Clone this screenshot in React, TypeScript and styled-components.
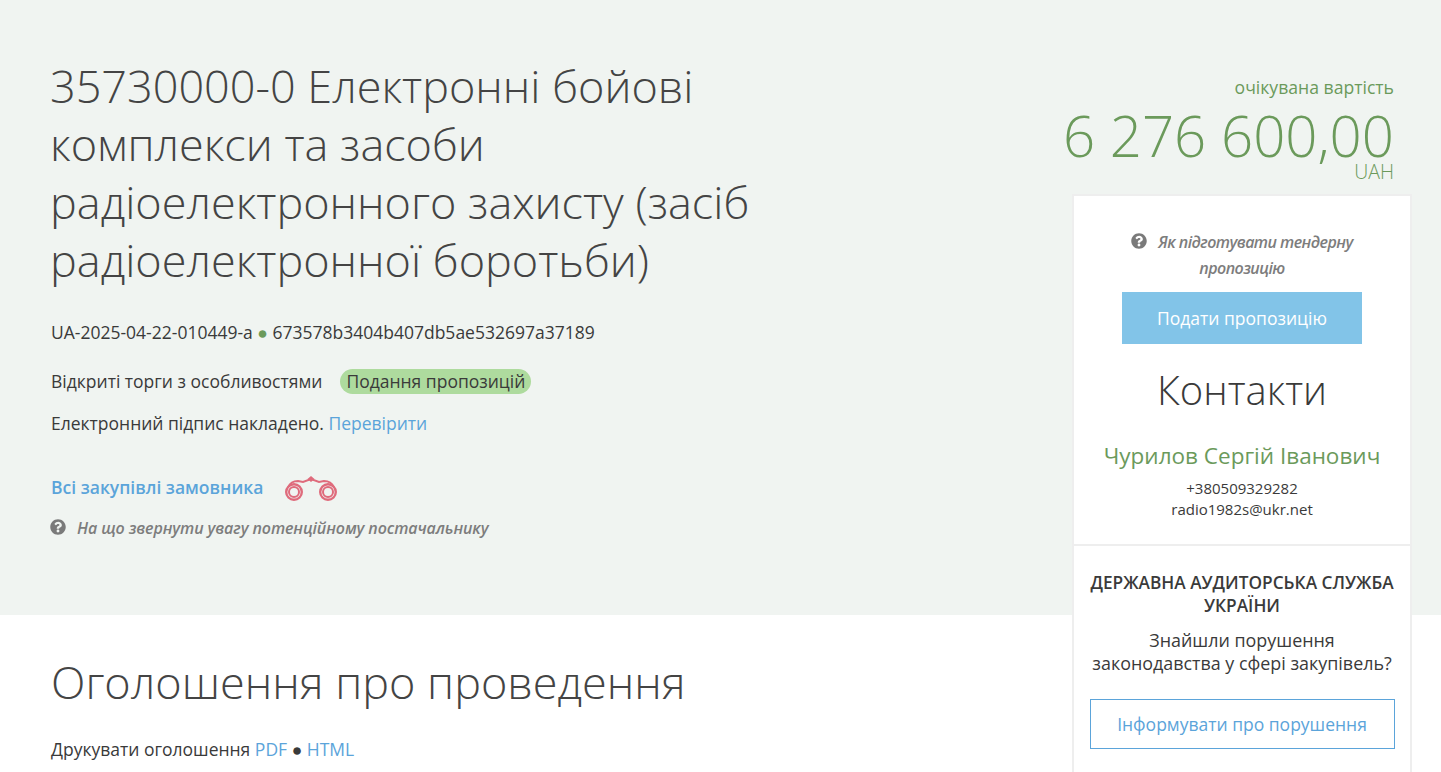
import React from 'react';
import styled, { createGlobalStyle } from 'styled-components';
import { FaQuestionCircle } from 'react-icons/fa';

const GlobalStyle = createGlobalStyle`
  html, body {
    margin: 0;
    padding: 0;
    height: 100%;
    overflow: hidden;
    background: #fff;
  }
  body {
    font-family: "Open Sans", "Noto Sans", sans-serif;
    font-size: 17.5px;
    color: #3a3a3a;
  }
`;

const Binoculars: React.FC = () => (
  <BinocularsSvg viewBox="0 0 52 28" fill="none" stroke="#df6b7c">
    <circle cx="9" cy="16" r="7.8" strokeWidth="2.4" />
    <circle cx="9" cy="16" r="5" strokeWidth="2" />
    <circle cx="43" cy="16" r="7.8" strokeWidth="2.4" />
    <circle cx="43" cy="16" r="5" strokeWidth="2" />
    <path d="M3.5 11 C5 7 8 5 13 5 L18 6 L26 3 L34 6 L39 5 C44 5 47 7 48.5 11" strokeWidth="2" />
    <path d="M26 0 L29.5 3 L26 6 L22.5 3 Z" fill="#df6b7c" strokeWidth="0" />
  </BinocularsSvg>
);

const App: React.FC = () => {
  return (
    <>
      <GlobalStyle />
      <Hero>
        <Main>
          <Title>
            35730000-0 Електронні бойові комплекси та засоби радіоелектронного захисту (засіб
            радіоелектронної боротьби)
          </Title>
          <IdRow>
            UA-2025-04-22-010449-a <Dot>●</Dot> 673578b3404b407db5ae532697a37189
          </IdRow>
          <TypeRow>
            Відкриті торги з особливостями
            <StatusBadge>Подання пропозицій</StatusBadge>
          </TypeRow>
          <SignRow>
            Електронний підпис накладено. <Link href="#">Перевірити</Link>
          </SignRow>
          <CustomerRow>
            <BoldLink href="#">Всі закупівлі замовника</BoldLink>
            <Binoculars />
          </CustomerRow>
          <HintRow>
            <HintIcon />
            <HintText>На що звернути увагу потенційному постачальнику</HintText>
          </HintRow>
        </Main>
        <Side>
          <PriceLabel>очікувана вартість</PriceLabel>
          <Price>6 276 600,00</Price>
          <Currency>UAH</Currency>
          <Card>
            <CardTop>
              <CardHint>
                <CardHintIcon />
                Як підготувати тендерну пропозицію
              </CardHint>
              <SubmitButton>Подати пропозицію</SubmitButton>
              <ContactsTitle>Контакти</ContactsTitle>
              <ContactName>Чурилов Сергій Іванович</ContactName>
              <ContactLine>+380509329282</ContactLine>
              <ContactLine>radio1982s@ukr.net</ContactLine>
            </CardTop>
            <CardBottom>
              <AuditTitle>ДЕРЖАВНА АУДИТОРСЬКА СЛУЖБА УКРАЇНИ</AuditTitle>
              <AuditText>Знайшли порушення законодавства у сфері закупівель?</AuditText>
              <ReportButton>Інформувати про порушення</ReportButton>
            </CardBottom>
          </Card>
        </Side>
      </Hero>
      <Notice>
        <NoticeTitle>Оголошення про проведення</NoticeTitle>
        <PrintRow>
          Друкувати оголошення <Link href="#">PDF</Link> ● <Link href="#">HTML</Link>
        </PrintRow>
      </Notice>
    </>
  );
};

const Hero = styled.header`
  display: flex;
  justify-content: space-between;
  height: 615px;
  padding: 0 29px 0 51px;
  box-sizing: border-box;
  background: #f0f4f1;
`;

const Main = styled.div`
  width: 740px;
  padding-top: 57px;
`;

const Title = styled.h1`
  margin: 0 0 0 -1px;
  font-size: 45px;
  line-height: 58px;
  font-weight: 300;
  color: #444;
`;

const IdRow = styled.div`
  margin-top: 32px;
  line-height: 22px;
`;

const Dot = styled.span`
  color: #6b9a5b;
`;

const TypeRow = styled.div`
  display: flex;
  align-items: center;
  margin-top: 25px;
  line-height: 26px;
`;

const StatusBadge = styled.span`
  margin-left: 18px;
  padding: 0 6px;
  border-radius: 13px;
  line-height: 25px;
  background: #aedb9e;
`;

const SignRow = styled.div`
  margin-top: 16px;
  line-height: 26px;
`;

const Link = styled.a`
  color: #5ba4da;
  text-decoration: none;
`;

const BoldLink = styled(Link)`
  font-weight: 600;
`;

const CustomerRow = styled.div`
  display: flex;
  align-items: center;
  gap: 22px;
  margin-top: 33px;
  height: 36px;
`;

const BinocularsSvg = styled.svg`
  width: 52px;
  height: 28px;
  margin-top: 6px;
`;

const HintRow = styled.div`
  display: flex;
  align-items: center;
  gap: 11px;
  margin-top: 11px;
  height: 24px;
`;

const HintIcon = styled(FaQuestionCircle)`
  width: 16px;
  height: 16px;
  margin: -2px 0 0 -1px;
  color: #7a7a7a;
`;

const HintText = styled.em`
  font-size: 16px;
  font-weight: 600;
  color: #7d7d7d;
  letter-spacing: -0.1px;
`;

const Side = styled.aside`
  display: flex;
  flex-direction: column;
  align-items: flex-end;
  width: 340px;
  padding-top: 74px;
`;

const PriceLabel = styled.div`
  margin-right: 18px;
  font-size: 17.6px;
  line-height: 26px;
  color: #6b9a5b;
  white-space: nowrap;
`;

const Price = styled.div`
  margin: 8px 18px 0 0;
  font-size: 56.4px;
  line-height: 56px;
  font-weight: 300;
  color: #6b9a5b;
  white-space: nowrap;
`;

const Currency = styled.div`
  margin: 1px 18px 0 0;
  font-size: 19.5px;
  line-height: 14px;
  font-weight: 300;
  color: #6b9a5b;
`;

const Card = styled.section`
  width: 340px;
  margin-top: 15px;
  box-sizing: border-box;
  background: #fff;
  border: 2px solid #eeeeee;
  flex-shrink: 0;
`;

const CardTop = styled.div`
  display: flex;
  flex-direction: column;
  align-items: center;
  padding: 33px 0 24px;
  text-align: center;
`;

const CardHint = styled.em`
  width: 240px;
  font-size: 16px;
  font-weight: 600;
  line-height: 26px;
  color: #7d7d7d;
  letter-spacing: -0.55px;
`;

const CardHintIcon = styled(FaQuestionCircle)`
  width: 16px;
  height: 16px;
  margin-right: 11px;
  vertical-align: -1px;
  color: #7a7a7a;
`;

const SubmitButton = styled.button`
  width: 240px;
  height: 52px;
  margin-top: 11px;
  border: 0;
  background: #82c4e8;
  color: #fff;
  font-family: inherit;
  font-size: 17.5px;
`;

const ContactsTitle = styled.h2`
  margin: 18px 0 0;
  font-size: 40px;
  line-height: 56px;
  font-weight: 300;
  color: #3a3a3a;
`;

const ContactName = styled.div`
  margin: 23px 0 7px;
  font-size: 22.5px;
  line-height: 30px;
  color: #6b9a5b;
`;

const ContactLine = styled.div`
  font-size: 15px;
  line-height: 21px;
  color: #3a3a3a;
`;

const CardBottom = styled.div`
  display: flex;
  flex-direction: column;
  align-items: center;
  padding: 25px 15px 24px;
  border-top: 2px solid #eeeeee;
  text-align: center;
`;

const AuditTitle = styled.h3`
  margin: 0;
  font-size: 17.25px;
  line-height: 23px;
  font-weight: 600;
  color: #3a3a3a;
`;

const AuditText = styled.p`
  margin: 12px 0 0;
  font-size: 17.9px;
  line-height: 23px;
  color: #3a3a3a;
`;

const ReportButton = styled.button`
  width: 305px;
  height: 50px;
  margin-top: 24px;
  border: 1px solid #5ba4da;
  background: #fff;
  color: #5ba4da;
  font-family: inherit;
  font-size: 17.5px;
`;

const Notice = styled.section`
  padding: 35px 0 0 51px;
`;

const NoticeTitle = styled.h2`
  margin: 0;
  font-size: 45px;
  line-height: 64px;
  font-weight: 300;
  color: #444;
`;

const PrintRow = styled.div`
  margin-top: 23px;
  line-height: 24px;
`;

export default App;
